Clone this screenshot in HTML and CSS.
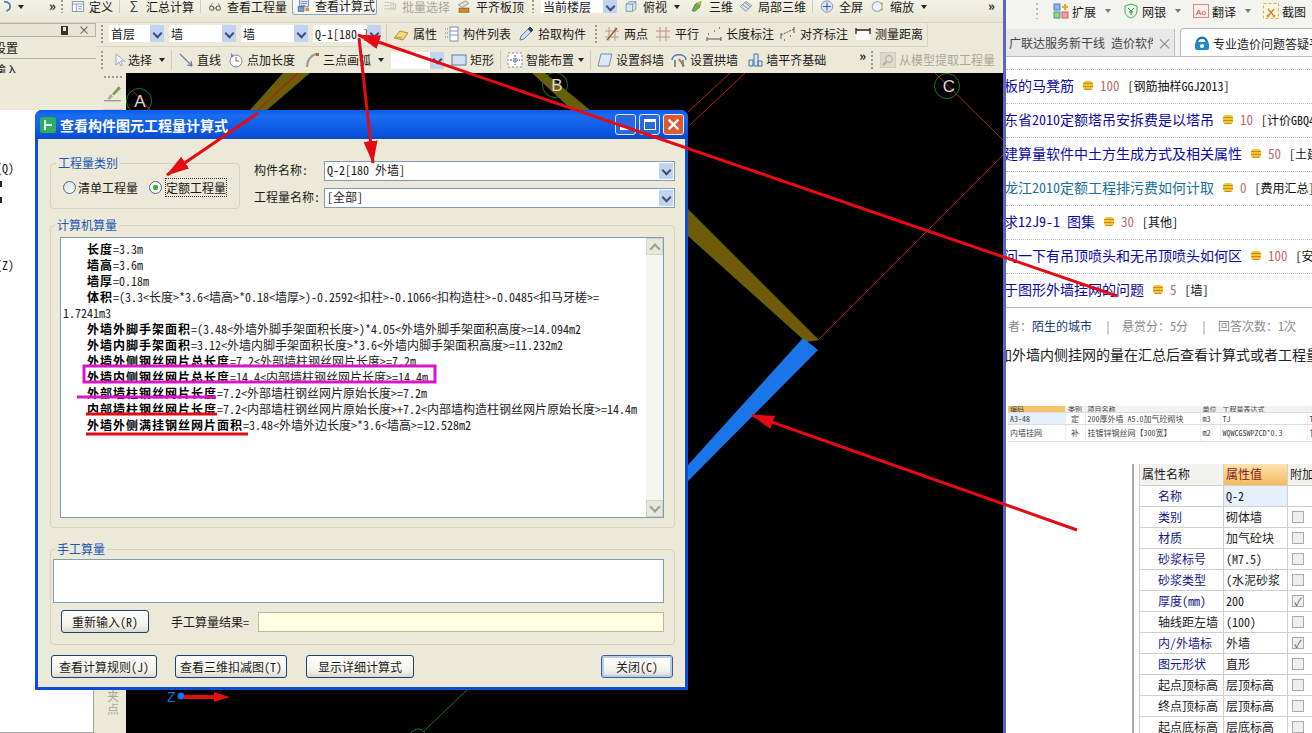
FILE: index.html
```html
<!DOCTYPE html>
<html lang="zh-CN">
<head>
    <meta charset="UTF-8">
    <title>查看构件图元工程量计算式</title>
    <link rel="stylesheet" href="styles.css">
</head>
<body>

<div class="desktop">

    <!-- CAD application -->
    <div class="app">
        <div class="bar bar-top">
            <svg class="ico ico-clip" viewBox="0 0 16 16"><path d="M3 2c6 0 9 3 7 9l-4 3" fill="none" stroke="#4a79b8" stroke-width="2"/></svg>
            <span class="caret caret-a"></span>
            <span class="more more-a">»</span>
            <span class="grip"></span>
            <span class="tool gap-0 t-first"><svg class="ico" viewBox="0 0 16 16"><rect x="1" y="2" width="14" height="12" fill="#fff" stroke="#6b86a8"/><path d="M1 5h14M6 5v9M8 8h5M8 11h5" stroke="#6b86a8" fill="none"/></svg>定义</span>
            <span class="sep"></span>
            <span class="tool gap-0"><span class="sigma">Σ</span>汇总计算</span>
            <span class="sep"></span>
            <span class="tool gap-5"><svg class="ico" viewBox="0 0 16 16"><circle cx="4" cy="10" r="2.6" fill="none" stroke="#666" stroke-width="1.3"/><circle cx="12" cy="10" r="2.6" fill="none" stroke="#666" stroke-width="1.3"/><path d="M6.5 10h3M2 8l3-4M14 8l-2-4" stroke="#666" fill="none"/></svg>查看工程量</span>
            <span class="tool tool-on"><svg class="ico ico-big" viewBox="0 0 20 20"><rect x="3" y="1" width="14" height="11" fill="#dfe8f5" stroke="#3e6aa8"/><path d="M5 4h10M5 7h10M5 10h7" stroke="#3e6aa8"/><rect x="1" y="12" width="9" height="7" fill="#7f9cc8" stroke="#34568c"/><circle cx="15" cy="16" r="3" fill="#d88b2a"/></svg>查看计算式</span>
            <span class="tool tool-off gap-6"><svg class="ico" viewBox="0 0 16 16"><path d="M1 3h9M1 7h6M1 11h9M12 2v11" stroke="#bbb" fill="none"/><rect x="9" y="5" width="6" height="6" fill="none" stroke="#bbb"/></svg>批量选择</span>
            <span class="tool gap-5"><svg class="ico" viewBox="0 0 16 16"><path d="M1 6l9-5 4 3-8 5z" fill="#e0e0d8" stroke="#888"/><rect x="2" y="10" width="12" height="5" fill="#c9922e" stroke="#8a5d18"/></svg>平齐板顶</span>
            <span class="grip"></span>
            <span class="combo combo-floor"><span class="combo-text">当前楼层</span><span class="combo-btn"></span></span>
            <span class="tool t-top"><svg class="ico" viewBox="0 0 16 16"><path d="M2 5l4-3h8v9l-4 3H2zM2 5h8v9M10 5l4-3" fill="#dbe7f2" stroke="#6d8aa5"/></svg>俯视</span>
            <span class="caret"></span>
            <span class="tool gap-5"><svg class="ico" viewBox="0 0 16 16"><path d="M2 13l4-8 7-3-2 7-6 5z" fill="#6fae4c" stroke="#3d7a2c"/><circle cx="11" cy="4" r="2" fill="#d8b13a"/></svg>三维</span>
            <span class="tool gap-0"><svg class="ico" viewBox="0 0 16 16"><path d="M1 8l7-6 7 5-7 7z" fill="#dfe6f0" stroke="#6d82a0"/><path d="M4 6l7 5M7 3.500l6 5" stroke="#6d82a0"/></svg>局部三维</span>
            <span class="sep"></span>
            <span class="tool gap-7"><svg class="ico" viewBox="0 0 16 16"><circle cx="8" cy="8" r="7" fill="#dfe7f3" stroke="#6d86aa"/><path d="M8 3v10M3 8h10" stroke="#3e62a0" stroke-width="1.400"/></svg>全屏</span>
            <span class="tool"><svg class="ico" viewBox="0 0 16 16"><circle cx="7" cy="8" r="6" fill="#eef3fa" stroke="#9db1cc" stroke-width="1.500"/><path d="M13 3v3M13 10v3" stroke="#d8a92e" stroke-width="2"/></svg>缩放</span>
            <span class="caret"></span>
            <span class="more more-b">»</span>
        </div>

        <div class="bar-row">
            <div class="side-top">
                <div class="pane-head"><span class="pin"></span><span class="pane-x">×</span></div>
                <div class="pane-row"><span class="pane-text">设置</span></div>
                <div class="pane-row"><span class="pane-text">输入</span></div>
            </div>

            <div class="toolbars">
                <div class="bar bar-mid">
                    <span class="grip grip-tight"></span>
                    <span class="combo combo-a"><span class="combo-text">首层</span><span class="combo-btn"></span></span>
                    <span class="combo combo-b"><span class="combo-text">墙</span><span class="combo-btn"></span></span>
                    <span class="combo combo-b"><span class="combo-text">墙</span><span class="combo-btn"></span></span>
                    <span class="combo combo-c"><span class="combo-text">Q-1[180 ]</span><span class="combo-btn"></span></span>
                    <span class="sep sep-tight"></span>
                    <span class="tool gap-6"><svg class="ico" viewBox="0 0 16 16"><path d="M1 12l6-7 8 2-5 7z" fill="#f1d98b" stroke="#b8912e"/><path d="M3 11l6 1" stroke="#b8912e"/></svg>属性</span>
                    <span class="tool"><svg class="ico" viewBox="0 0 16 16"><path d="M2 3h3M2 7h3M2 11h3" stroke="#777" stroke-dasharray="1 1"/><rect x="7" y="1" width="8" height="14" fill="#fff" stroke="#7a93b4"/><path d="M7 5h8M7 9h8" stroke="#7a93b4"/></svg>构件列表</span>
                    <span class="tool gap-6"><svg class="ico" viewBox="0 0 16 16"><path d="M2 14l1-4 7-7 3 3-7 7z" fill="#cfe0f2" stroke="#5c7fa8"/><path d="M10 3l2-2 3 3-2 2" fill="#345" stroke="#345"/></svg>拾取构件</span>
                    <span class="grip"></span>
                    <span class="tool"><svg class="ico" viewBox="0 0 16 16"><path d="M1 5h14M1 11h14M5 1v14M11 1v14" stroke="#b89a88" fill="none"/><path d="M3 14L13 2" stroke="#a0522d" stroke-width="1.300"/></svg>两点</span>
                    <span class="tool"><svg class="ico" viewBox="0 0 16 16"><path d="M1 5h14M1 11h14M5 1v14M11 1v14" stroke="#c58a8a" fill="none"/></svg>平行</span>
                    <span class="tool gap-6"><svg class="ico" viewBox="0 0 16 16"><path d="M1 11v4M15 11v4M1 13h14" stroke="#555" fill="none"/><path d="M2 8h1M13 2h1M8 5h1" stroke="#6a9a5b" stroke-width="2"/></svg>长度标注</span>
                    <span class="tool"><svg class="ico" viewBox="0 0 16 16"><path d="M1 9l13-6" stroke="#555" stroke-dasharray="2 1"/><path d="M1 7v6M14 1v6" stroke="#555"/><path d="M4 14h1M10 10h1" stroke="#6a9a5b" stroke-width="2"/></svg>对齐标注</span>
                    <span class="tool"><svg class="ico" viewBox="0 0 16 16"><rect x="1" y="4" width="14" height="10" fill="#fff"/><path d="M1 2v6M15 2v6M1 4h14" stroke="#222" fill="none" stroke-width="1.300"/></svg>测量距离</span>
                </div>

                <div class="bar bar-low">
                    <span class="grip grip-low"></span>
                    <span class="tool t-select"><svg class="ico" viewBox="0 0 16 16"><path d="M5 2v11l3-3 2 4 1.500-1-2-4h4z" fill="#fff" stroke="#9aa7b8"/></svg>选择</span>
                    <span class="caret caret-end"></span>
                    <span class="sep"></span>
                    <span class="tool gap-7"><svg class="ico" viewBox="0 0 16 16"><path d="M2 2l12 12M14 14l-5-1M14 14l-1-5" stroke="#5b7fa8" fill="none" stroke-width="1.200"/></svg>直线</span>
                    <span class="tool"><svg class="ico" viewBox="0 0 16 16"><circle cx="8" cy="9" r="6" fill="#fff" stroke="#6f8aa8"/><path d="M8 5v4h3" stroke="#8a5d3a" fill="none"/><path d="M3 1l3 3-3 2" fill="#6f8aa8"/></svg>点加长度</span>
                    <span class="tool"><svg class="ico" viewBox="0 0 16 16"><path d="M3 15C3 8 7 3 13 2" stroke="#999" fill="none" stroke-width="2"/><path d="M12 1h3v3h-3z" fill="#a06a3a"/></svg>三点画弧</span>
                    <span class="caret"></span>
                    <span class="combo combo-d"><span class="combo-text"></span><span class="combo-btn"></span></span>
                    <span class="tool gap-0"><svg class="ico" viewBox="0 0 16 16"><rect x="1" y="3" width="14" height="10" fill="#cfe0f5" stroke="#5d7fb0"/></svg>矩形</span>
                    <span class="sep"></span>
                    <span class="tool gap-6"><svg class="ico" viewBox="0 0 16 16"><rect x="1" y="1" width="14" height="14" fill="#fff" stroke="#888" stroke-dasharray="2 2"/><path d="M8 3v10M3 8h10" stroke="#345" stroke-dasharray="2 1"/><rect x="6" y="6" width="4" height="4" fill="#8ab"/></svg>智能布置</span>
                    <span class="caret caret-end"></span>
                    <span class="sep"></span>
                    <span class="tool gap-7"><svg class="ico" viewBox="0 0 16 16"><path d="M4 2h11l-3 12H1z" fill="#dde9f6" stroke="#6d8fb8"/></svg>设置斜墙</span>
                    <span class="tool"><svg class="ico" viewBox="0 0 16 16"><path d="M1 8C1 1 15 1 15 8M4 8v7M12 8v7" fill="none" stroke="#4f7aa8" stroke-width="1.500"/><path d="M8 7l5 7" stroke="#a9773a" stroke-width="2"/></svg>设置拱墙</span>
                    <span class="tool"><svg class="ico" viewBox="0 0 16 16"><path d="M2 8h4v6H2zM7 2h4v12H7zM11 9h4v5h-4z" fill="#dce7f5" stroke="#4a6fa5"/></svg>墙平齐基础</span>
                    <span class="more more-c">»</span>
                    <span class="grip"></span>
                    <span class="tool tool-off"><svg class="ico" viewBox="0 0 16 16"><rect x="0" y="0" width="16" height="16" fill="#dcd9c9" stroke="#c6c3b3"/><circle cx="9" cy="7" r="3.500" fill="none" stroke="#aaa"/><path d="M6 10l-3 3" stroke="#aaa" stroke-width="2"/></svg>从模型提取工程量</span>
                </div>
            </div>
        </div>

        <div class="work">
            <div class="side">
                <div class="side-list">
                    <span class="side-item side-q">(Q)</span>
                    <span class="side-item side-m1"></span>
                    <span class="side-item side-m2"></span>
                    <span class="side-item side-z">(Z)</span>
                </div>
            </div>

            <div class="vbar">
                <span class="vgrip"></span>
                <svg class="ico ico-brush" viewBox="0 0 16 16"><path d="M0 14h15" stroke="#888"/><path d="M3 12l3-4 2 2-3 3z" fill="#a9a9a9"/><path d="M7 8l6-7 2 2-6 6z" fill="#7c9a5b"/></svg>
                <span class="vsep"></span>
                <span class="vtext">夹点</span>
            </div>

            <div class="canvas">
                <svg class="cad" viewBox="126 73 877 660">
                    <!-- walls -->
                    <path d="M283 73L310 73L267 110L250 110Z" fill="#6b5e08"/>
                    <path d="M298 73L258 110" stroke="#a62a10" stroke-width="1.500"/>
                    <path d="M532 73L545 73L590 110L572 110Z" fill="#6b5e08"/>
                    <path d="M688 209L688 236L806 342L819 340Z" fill="#6b5e08"/>
                    <path d="M688 222L812 341" stroke="#8a4a10" stroke-width="1.500"/>
                    <!-- selected wall -->
                    <path d="M803 338L818 350L688 481L688 465Z" fill="#1a76e8"/>
                    <!-- axis lines -->
                    <g stroke="#b82020" fill="none">
                        <path d="M730 73L688 112"/>
                        <path d="M745 73L690 125"/>
                        <path d="M935 73L1003 140"/>
                        <path d="M1003 155L818 340"/>
                        <path d="M132 90L152 112"/>
                    </g>
                    <!-- axis bubbles -->
                    <g fill="none" stroke="#1f7a1f">
                        <circle cx="139" cy="101" r="12.500"/>
                        <circle cx="555" cy="85" r="12.500"/>
                        <circle cx="947" cy="86" r="12.500"/>
                        <circle cx="418" cy="737" r="8"/>
                        <path d="M424 731L467 690"/>
                    </g>
                    <g class="cad-label">
                        <text x="140" y="107">A</text>
                        <text x="557" y="91">B</text>
                        <text x="949" y="92">C</text>
                    </g>
                    <!-- ucs -->
                    <text class="cad-z" x="167" y="702">Z</text>
                    <circle cx="181" cy="696" r="3.500" fill="#1a6fe0"/>
                    <path d="M184 697H216" stroke="#e01010" stroke-width="4"/>
                    <path d="M214 692L230 697L214 702Z" fill="#e01010"/>
                </svg>
            </div>
        </div>
    </div>

    <!-- browser on the right -->
    <div class="browser">
        <div class="br-bar">
            <span class="br-grip"></span>
            <span class="br-tool"><svg class="ico" viewBox="0 0 16 16"><rect x="1" y="1" width="6" height="6" fill="#8fb7e8" stroke="#4a7fc0"/><rect x="1" y="9" width="6" height="6" fill="#8fd09a" stroke="#4aa060"/><rect x="9" y="9" width="6" height="6" fill="#f0a0a0" stroke="#d06060"/><path d="M12 1v6M9 4h6" stroke="#e8a820" stroke-width="2"/></svg>扩展</span>
            <span class="caret"></span>
            <span class="br-tool"><svg class="ico" viewBox="0 0 16 16"><path d="M8 1l6 2v5c0 4-3 6-6 7-3-1-6-3-6-7V3z" fill="#e6f5e6" stroke="#4aa860"/><path d="M5 5l3 3 3-3M8 8v4M6 9h4" stroke="#2e8a48" fill="none"/></svg>网银</span>
            <span class="caret"></span>
            <span class="br-tool"><svg class="ico" viewBox="0 0 16 16"><rect x="0.500" y="1.500" width="15" height="13" fill="#fdeeee" stroke="#d88"/><text class="ao" x="8" y="11.500">Ao</text></svg>翻译</span>
            <span class="caret"></span>
            <span class="br-tool"><svg class="ico" viewBox="0 0 16 16"><rect x="0.500" y="0.500" width="15" height="15" fill="#fff8e0" stroke="#d8b050" stroke-dasharray="3 2"/><path d="M5 13l6-7M11 13L5 6" stroke="#b8862a" stroke-width="1.300"/><circle cx="5" cy="13" r="1.500" fill="#d89a30"/><circle cx="11" cy="13" r="1.500" fill="#d89a30"/></svg>截图</span>
        </div>
        <div class="br-tabs">
            <span class="tab tab-off"><span class="tab-text">广联达服务新干线 造价软件</span><span class="tab-x">×</span></span>
            <span class="tab tab-on"><svg class="ico" viewBox="0 0 16 16"><path d="M3 8C3 1 13 1 13 8" fill="none" stroke="#1a78b8" stroke-width="2.500"/><rect x="1" y="7" width="14" height="8" rx="2" fill="#1f8ac8"/><circle cx="8" cy="11" r="2" fill="#fff"/></svg>专业造价问题答疑平台</span>
        </div>
        <div class="br-body">
            <ul class="q-list">
                <li class="q-row"><a class="q-link">板的马凳筋</a><span class="coin"></span><span class="q-score">100</span><span class="q-tag">[钢筋抽样GGJ2013]</span></li>
                <li class="q-row"><a class="q-link">东省2010定额塔吊安拆费是以塔吊</a><span class="coin"></span><span class="q-score">10</span><span class="q-tag">[计价GBQ4.0]</span></li>
                <li class="q-row"><a class="q-link">建算量软件中土方生成方式及相关属性</a><span class="coin"></span><span class="q-score">50</span><span class="q-tag">[土建]</span></li>
                <li class="q-row"><a class="q-link q-seen">龙江2010定额工程排污费如何计取</a><span class="coin"></span><span class="q-score">0</span><span class="q-tag">[费用汇总]</span></li>
                <li class="q-row"><a class="q-link">求12J9-1 图集</a><span class="coin"></span><span class="q-score">30</span><span class="q-tag">[其他]</span></li>
                <li class="q-row"><a class="q-link">问一下有吊顶喷头和无吊顶喷头如何区</a><span class="coin"></span><span class="q-score">100</span><span class="q-tag">[安装]</span></li>
                <li class="q-row"><a class="q-link">于图形外墙挂网的问题</a><span class="coin"></span><span class="q-score">5</span><span class="q-tag">[墙]</span></li>
            </ul>
            <div class="q-meta">
                <span class="meta-a">者：<b class="meta-name">陌生的城市</b></span><span class="meta-sep">|</span><span>悬赏分：5分</span><span class="meta-sep">|</span><span>回答次数：1次</span>
            </div>
            <p class="q-text">加外墙内侧挂网的量在汇总后查看计算式或者工程量</p>

            <table class="shot-table">
                <tr class="shot-head"><td>编码</td><td>类别</td><td>项目名称</td><td>单位</td><td>工程量表达式</td><td></td></tr>
                <tr><td class="shot-key">A3-48</td><td>定</td><td>200厚外墙 A5.0加气砼砌块</td><td>m3</td><td>TJ</td><td>T</td></tr>
                <tr class="shot-tall"><td>内墙挂网</td><td>补</td><td>挂镀锌钢丝网【300宽】</td><td>m2</td><td>WQWCGSWPZCD*0.3</td><td>甘</td></tr>
            </table>

            <div class="props">
                <table class="prop-table">
                    <tr><th>属性名称</th><th class="prop-hot">属性值</th><th>附加</th></tr>
                    <tr><td class="pn">名称</td><td class="pv pv-cur">Q-2</td><td></td></tr>
                    <tr><td class="pn">类别</td><td class="pv">砌体墙</td><td><span class="chk"></span></td></tr>
                    <tr><td class="pn">材质</td><td class="pv">加气砼块</td><td><span class="chk"></span></td></tr>
                    <tr><td class="pn">砂浆标号</td><td class="pv">(M7.5)</td><td><span class="chk"></span></td></tr>
                    <tr><td class="pn">砂浆类型</td><td class="pv">(水泥砂浆</td><td><span class="chk"></span></td></tr>
                    <tr><td class="pn">厚度(mm)</td><td class="pv">200</td><td><span class="chk chk-on">✓</span></td></tr>
                    <tr><td class="pn pn-k">轴线距左墙</td><td class="pv">(100)</td><td><span class="chk"></span></td></tr>
                    <tr><td class="pn">内/外墙标</td><td class="pv">外墙</td><td><span class="chk chk-on">✓</span></td></tr>
                    <tr><td class="pn">图元形状</td><td class="pv">直形</td><td><span class="chk"></span></td></tr>
                    <tr><td class="pn pn-k">起点顶标高</td><td class="pv">层顶标高</td><td><span class="chk"></span></td></tr>
                    <tr><td class="pn pn-k">终点顶标高</td><td class="pv">层顶标高</td><td><span class="chk"></span></td></tr>
                    <tr><td class="pn pn-k">起点底标高</td><td class="pv">层底标高</td><td><span class="chk"></span></td></tr>
                </table>
            </div>
        </div>
    </div>

    <!-- dialog window -->
    <div class="dialog">
        <div class="dlg-title">
            <svg class="dlg-icon" viewBox="0 0 16 16"><rect width="16" height="16" rx="2" fill="#2fae5f"/><path d="M5 3v10M5 8h7M9 5v0" stroke="#fff" stroke-width="1.800" fill="none"/></svg>
            <span class="dlg-name">查看构件图元工程量计算式</span>
            <span class="win-btn"><span class="win-min"></span></span>
            <span class="win-btn"><span class="win-max"></span></span>
            <span class="win-btn win-close">
                <svg viewBox="0 0 12 12"><path d="M1.500 1.500l9 9M10.500 1.500l-9 9" stroke="#fff" stroke-width="2.200"/></svg>
            </span>
        </div>
        <div class="dlg-body">
            <div class="dlg-head">
                <fieldset class="group group-kind">
                    <legend>工程量类别</legend>
                    <label class="radio"><span class="radio-dot"></span>清单工程量</label>
                    <label class="radio"><span class="radio-dot radio-on"></span><span class="focus">定额工程量</span></label>
                </fieldset>
                <div class="form-rows">
                    <div class="form-row">
                        <span class="form-label">构件名称:</span>
                        <span class="select"><span class="select-text">Q-2[180 外墙]</span><span class="select-btn"></span></span>
                    </div>
                    <div class="form-row">
                        <span class="form-label">工程量名称:</span>
                        <span class="select"><span class="select-text">[全部]</span><span class="select-btn"></span></span>
                    </div>
                </div>
            </div>

            <fieldset class="group group-calc">
                <legend>计算机算量</legend>
                <div class="calc-box">
                    <div class="calc-text">
                        <p class="calc-line"><b>长度</b>=3.3m</p>
                        <p class="calc-line"><b>墙高</b>=3.6m</p>
                        <p class="calc-line"><b>墙厚</b>=0.18m</p>
                        <p class="calc-line"><b>体积</b>=(3.3&lt;长度&gt;*3.6&lt;墙高&gt;*0.18&lt;墙厚&gt;)-0.2592&lt;扣柱&gt;-0.1066&lt;扣构造柱&gt;-0.0485&lt;扣马牙槎&gt;=</p>
                        <p class="calc-line calc-wrap">1.7241m3</p>
                        <p class="calc-line"><b>外墙外脚手架面积</b>=(3.48&lt;外墙外脚手架面积长度&gt;)*4.05&lt;外墙外脚手架面积高度&gt;=14.094m2</p>
                        <p class="calc-line"><b>外墙内脚手架面积</b>=3.12&lt;外墙内脚手架面积长度&gt;*3.6&lt;外墙内脚手架面积高度&gt;=11.232m2</p>
                        <p class="calc-line"><b>外墙外侧钢丝网片总长度</b>=7.2&lt;外部墙柱钢丝网片长度&gt;=7.2m</p>
                        <p class="calc-line"><b>外墙内侧钢丝网片总长度</b>=14.4&lt;内部墙柱钢丝网片长度&gt;=14.4m</p>
                        <p class="calc-line"><b>外部墙柱钢丝网片长度</b>=7.2&lt;外部墙柱钢丝网片原始长度&gt;=7.2m</p>
                        <p class="calc-line"><b>内部墙柱钢丝网片长度</b>=7.2&lt;内部墙柱钢丝网片原始长度&gt;+7.2&lt;内部墙构造柱钢丝网片原始长度&gt;=14.4m</p>
                        <p class="calc-line"><b>外墙外侧满挂钢丝网片面积</b>=3.48&lt;外墙外边长度&gt;*3.6&lt;墙高&gt;=12.528m2</p>
                    </div>
                    <div class="scroll">
                        <span class="scroll-btn scroll-up"></span>
                        <span class="scroll-btn scroll-down"></span>
                    </div>
                </div>
            </fieldset>

            <fieldset class="group group-hand">
                <legend>手工算量</legend>
                <div class="hand-box"></div>
                <div class="hand-row">
                    <button class="btn btn-reset">重新输入(R)</button>
                    <span class="hand-label">手工算量结果=</span>
                    <span class="hand-result"></span>
                </div>
            </fieldset>

            <div class="dlg-foot">
                <button class="btn btn-rule">查看计算规则(J)</button>
                <button class="btn btn-3d">查看三维扣减图(T)</button>
                <button class="btn btn-detail">显示详细计算式</button>
                <button class="btn btn-close">关闭(C)</button>
            </div>
        </div>
    </div>

    <!-- markup drawn over the screenshot -->
    <svg class="notes" viewBox="0 0 1312 733">
        <defs>
            <marker id="head" markerUnits="userSpaceOnUse" markerWidth="24" markerHeight="16" refX="22" refY="8" orient="auto">
                <path d="M0 1L23 8L0 15Z" fill="#e60a14"/>
            </marker>
        </defs>
        <g class="arrow">
            <path d="M258 113L167 175" marker-end="url(#head)"/>
            <path d="M359 38L373 163" marker-end="url(#head)"/>
            <path d="M1117 296L358 35" marker-end="url(#head)"/>
            <path d="M1077 530L752 415" marker-end="url(#head)"/>
        </g>
        <rect class="mark-box" x="84" y="366" width="351" height="16"/>
        <path class="mark-pink" d="M77 397H216"/>
        <path class="mark-red" d="M86 414H217"/>
        <path class="mark-red" d="M86 434H248"/>
    </svg>
</div>

</body>
</html>
```

FILE: styles.css
```css
* {
    box-sizing: border-box;
}

html, body {
    margin: 0;
    padding: 0;
}

body {
    width: 1312px;
    height: 733px;
    overflow: hidden;
    font-family: "Noto Sans Mono CJK SC", "Noto Sans CJK SC", "Liberation Sans", sans-serif;
    font-size: 12px;
    color: #1a1a1a;
}

.desktop {
    position: relative;
    display: flex;
    width: 1312px;
    height: 733px;
    overflow: hidden;
    background: #ece9d8;
}

/* ---------- application ---------- */
.app {
    display: flex;
    flex-direction: column;
    width: 1003px;
    flex: none;
}

.bar {
    display: flex;
    align-items: center;
    background: #ece9d8;
    white-space: nowrap;
    line-height: 16px;
}

/* the top bar is scrolled a little out of the picture */
.bar-top {
    height: 23px;
    padding-bottom: 9px;
    line-height: 13px;
    border-bottom: 1px solid #d8d5c5;
    background: linear-gradient(#f4f2e6, #e9e6d5);
}

.bar-top .tool {
    height: 13px;
}

.bar-top .tool-on {
    height: 18px;
    margin-top: -2px;
    border-top: 0;
    border-radius: 0 0 3px 3px;
}

.bar-top .ico {
    height: 13px;
}

.bar-row {
    display: flex;
    height: 50px;
    flex: none;
}

.side-top {
    width: 96px;
    flex: none;
    background: #e8e5d4;
}

.pane-head {
    display: flex;
    align-items: center;
    justify-content: flex-end;
    gap: 10px;
    height: 14px;
    padding-right: 5px;
    border: 1px solid #b5b29f;
    border-left: 0;
}

.pin {
    width: 7px;
    height: 9px;
    border: 2px solid #333;
    border-bottom-width: 4px;
    border-top-width: 1px;
}

.pane-x {
    color: #555;
    font-size: 12px;
    line-height: 12px;
}

.pane-row {
    height: 22px;
    line-height: 22px;
    border-bottom: 1px solid #b5b29f;
    overflow: hidden;
    background: #ece9d8;
}

.pane-text {
    display: block;
    margin-left: -6px;
}

.toolbars {
    display: flex;
    flex-direction: column;
    flex: 1;
    min-width: 0;
}

.bar-mid {
    height: 24px;
    width: 832px;
    padding: 0 0 2px 2px;
    border-bottom: 1px solid #d8d5c5;
    border-right: 1px solid #d8d5c5;
}

.bar-mid .tool {
    margin-right: 7px;
}

.bar-mid .tool.gap-6 {
    margin-right: 6px;
}

.bar-low {
    height: 26px;
    padding-left: 2px;
}

.bar-low .tool {
    gap: 3px;
}

.grip {
    flex: none;
    width: 2px;
    height: 18px;
    margin: 0 7px 0 3px;
    background: repeating-linear-gradient(#9d9a88 0 2px, transparent 2px 4px);
}

.bar-top .grip {
    height: 13px;
}

.grip-tight {
    margin-right: 6px;
}

.grip-low {
    margin-right: 8px;
}

.sep {
    flex: none;
    width: 1px;
    height: 20px;
    margin: 0 6px;
    background: #cfccba;
}

.bar-top .sep {
    height: 13px;
}

.sep-tight {
    margin: 0 6px 0 0;
}

.caret {
    flex: none;
    width: 0;
    height: 0;
    margin: 0 9px 0 -2px;
    border: 3px solid transparent;
    border-top: 4px solid #222;
    border-bottom: 0;
}

.caret-a {
    margin: 0 0 0 2px;
}

.caret-end {
    margin-right: 0;
}

.more {
    flex: none;
    font-size: 13px;
    font-weight: bold;
    line-height: 12px;
    align-self: flex-start;
}

.more-a {
    margin: 0 2px 0 25px;
}

.more-b {
    margin-left: 52px;
}

.more-c {
    margin: 3px 2px 0 24px;
}

.tool {
    display: inline-flex;
    align-items: center;
    flex: none;
    gap: 4px;
    margin-right: 9px;
}

.gap-0 {
    margin-right: 0;
}

.gap-5 {
    margin-right: 5px;
}

.gap-6 {
    margin-right: 6px;
}

.gap-7 {
    margin-right: 7px;
}

.ico {
    flex: none;
    width: 16px;
    height: 16px;
}

.ico-big {
    width: 20px;
    height: 20px;
}

.t-first {
    gap: 3px;
}

.sigma {
    width: 16px;
    text-align: center;
    font-size: 14px;
    line-height: 13px;
    color: #444;
}

.tool-on {
    height: 22px;
    gap: 1px;
    padding: 0 1px;
    margin: 0 5px 0 0;
    background: #f8f7f1;
    border: 1px solid #8fa2bd;
    border-radius: 3px;
}

.tool-off {
    color: #a9a79a;
}

.t-top {
    margin-left: 1px;
}

.t-select {
    margin-right: 9px;
}

.bar-low .t-select {
    gap: 1px;
}

.combo {
    display: inline-flex;
    align-items: center;
    justify-content: space-between;
    flex: none;
    height: 17px;
    margin-right: 5px;
    background: #fff;
}

.bar-top .combo {
    height: 13px;
}

.combo-a {
    width: 55px;
}

.combo-b {
    width: 67px;
}

.combo-c {
    width: 68px;
}

.combo-d {
    width: 53px;
    margin: 0 7px 0 -2px;
}

.combo-floor {
    width: 76px;
}

.combo-text {
    padding-left: 2px;
    overflow: hidden;
}

.combo-btn, .select-btn {
    position: relative;
    flex: none;
    width: 14px;
    height: 100%;
    background: #c1d3f0;
}

.combo-btn::after, .select-btn::after {
    content: "";
    position: absolute;
    left: 4px;
    top: 50%;
    width: 5px;
    height: 5px;
    margin-top: -4px;
    border-right: 2px solid #3d4f73;
    border-bottom: 2px solid #3d4f73;
    transform: rotate(45deg);
}

/* ---------- work area ---------- */
.work {
    display: flex;
    flex: 1;
    min-height: 0;
}

.side {
    width: 100px;
    flex: none;
    display: flex;
    flex-direction: column;
    background: #ece9d8;
}

.side-list {
    position: relative;
    width: 94px;
    height: 658px;
    margin-top: 37px;
    background: #fff;
    border-right: 1px solid #a8a8a0;
    border-bottom: 1px solid #a8a8a0;
    overflow: hidden;
}

.side-item {
    position: absolute;
    left: -4px;
}

.side-q {
    top: 49px;
}

.side-z {
    top: 146px;
}

.side-m1, .side-m2 {
    left: 0;
    width: 2px;
    height: 6px;
    background: #222;
}

.side-m1 {
    top: 71px;
}

.side-m2 {
    top: 87px;
}

.vbar {
    display: flex;
    flex-direction: column;
    align-items: center;
    width: 26px;
    flex: none;
    background: #ece9d8;
}

.vgrip {
    width: 18px;
    height: 2px;
    margin-top: 3px;
    background: repeating-linear-gradient(90deg, #9d9a88 0 2px, transparent 2px 4px);
}

.ico-brush {
    width: 18px;
    height: 18px;
    margin-top: 7px;
}

.vsep {
    width: 20px;
    height: 1px;
    margin-top: 6px;
    background: #cfccba;
}

.vtext {
    width: 12px;
    margin-top: auto;
    margin-bottom: 18px;
    color: #a9a79a;
    line-height: 13px;
}

.canvas {
    flex: 1;
    background: #000;
    min-width: 0;
}

.cad {
    display: block;
    width: 877px;
    height: 660px;
}

.cad-label text {
    fill: #d8d8d8;
    font-family: "Liberation Sans", sans-serif;
    font-size: 17px;
    text-anchor: middle;
}

.cad-z {
    fill: #1a6fe0;
    font-family: "Liberation Sans", sans-serif;
    font-size: 14px;
}

/* ---------- browser ---------- */
.browser {
    display: flex;
    flex-direction: column;
    width: 309px;
    flex: none;
    background: #fff;
    border-left: 3px solid #5a66c0;
}

.br-bar {
    display: flex;
    align-items: center;
    height: 28px;
    flex: none;
    padding-bottom: 6px;
    background: #f3f3ef;
    white-space: nowrap;
}

.br-grip {
    flex: none;
    width: 2px;
    height: 16px;
    margin: 0 15px 0 30px;
    background: repeating-linear-gradient(#bbb 0 2px, transparent 2px 5px);
}

.br-tool {
    display: inline-flex;
    align-items: center;
    gap: 3px;
    flex: none;
    font-size: 12px;
    margin-right: 9px;
}

.br-bar .caret {
    margin: 0 12px 0 0;
    border-top-color: #777;
}

.ao {
    font-family: "Liberation Sans", sans-serif;
    font-size: 8px;
    fill: #c44;
    text-anchor: middle;
}

.br-tabs {
    display: flex;
    align-items: flex-end;
    gap: 5px;
    height: 29px;
    flex: none;
    background: #f3f3ef;
    border-bottom: 1px solid #bbb;
    white-space: nowrap;
    overflow: hidden;
}

.tab {
    display: inline-flex;
    align-items: center;
    flex: none;
    height: 27px;
}

.tab-off {
    width: 169px;
    padding-left: 3px;
    background: #e8e8e8;
    color: #444;
    border-right: 1px solid #bbb;
}

.tab-text {
    width: 144px;
    overflow: hidden;
}

.tab-x {
    margin-left: 4px;
    font-size: 15px;
    color: #888;
}

.tab-on {
    gap: 3px;
    padding-left: 13px;
    height: 29px;
    margin-bottom: -1px;
    background: #fff;
    border: 1px solid #bbb;
    border-bottom: 0;
    border-radius: 4px 0 0 0;
}

.br-body {
    flex: 1;
    min-height: 0;
    overflow: hidden;
}

.q-list {
    margin: 12px 0 0;
    padding: 0;
    list-style: none;
    border-top: 1px dotted #b5b5b5;
}

.q-row {
    display: flex;
    align-items: center;
    height: 34px;
    padding-bottom: 3px;
    border-bottom: 1px dotted #b5b5b5;
    white-space: nowrap;
    overflow: hidden;
}

.q-row:last-child {
    border-bottom: 1px solid #bbb;
}

.q-link {
    margin-left: -2px;
    font-size: 14px;
    color: #0a0aa8;
}

.q-seen {
    color: #17709a;
}

.coin {
    flex: none;
    width: 10px;
    height: 9px;
    margin: 0 7px 0 9px;
    border-radius: 3px;
    background: repeating-linear-gradient(#f3c63a 0 2px, #c98a14 2px 3px);
}

.q-score {
    margin-right: 8px;
    font-size: 13px;
    color: #bb6a6a;
}

.q-tag {
    font-size: 12px;
    color: #111;
}

.q-meta {
    display: flex;
    height: 34px;
    align-items: center;
    padding-left: 2px;
    color: #8a8a8a;
    white-space: nowrap;
}

.meta-name {
    font-weight: normal;
    color: #143c78;
}

.meta-sep {
    margin: 0 11px 0 13px;
}

.q-text {
    margin: 2px 0 0 -8px;
    font-size: 14px;
    line-height: 20px;
    white-space: nowrap;
    color: #222;
}

.shot-table {
    width: 320px;
    margin: 42px 0 0 2px;
    border-collapse: collapse;
    table-layout: fixed;
    font-size: 8px;
    line-height: 10px;
    color: #444;
    white-space: nowrap;
}

.shot-table td {
    height: 12px;
    padding: 0 2px;
    border-bottom: 1px solid #ddd;
    border-right: 1px solid #eee;
    overflow: hidden;
}

.shot-table td:nth-child(1) {
    width: 57px;
}

.shot-table td:nth-child(2) {
    width: 20px;
    text-align: center;
}

.shot-table td:nth-child(3) {
    width: 115px;
}

.shot-table td:nth-child(4) {
    width: 20px;
}

.shot-table td:nth-child(5) {
    width: 87px;
}

.shot-table .shot-head td {
    height: 6px;
    line-height: 6px;
    font-size: 7px;
    background: #f1f1ee;
}

.shot-table .shot-head td:first-child {
    background: #f3c468;
}

.shot-key {
    background: #e5f0fa;
}

.shot-table .shot-tall td {
    height: 17px;
}

.props {
    width: 180px;
    height: 273px;
    margin: 22px 0 0 126px;
    padding-left: 5px;
    border-left: 2px solid #aaa;
    border-bottom: 4px solid #e4e4dc;
    overflow: hidden;
}

.prop-table {
    width: 175px;
    border-collapse: collapse;
    table-layout: fixed;
    white-space: nowrap;
    line-height: 14px;
}

.prop-table th, .prop-table td {
    height: 21px;
    padding: 0 2px;
    border: 1px solid #cfcfcf;
    font-weight: normal;
    overflow: hidden;
    text-align: left;
}

.prop-table th:nth-child(1) {
    width: 84px;
}

.prop-table th:nth-child(2) {
    width: 64px;
}

.prop-table th {
    border-top: 0;
    background: #f2f2ee;
}

.prop-table .prop-hot {
    color: #8a1a1a;
    background: linear-gradient(#fde3b0, #f3b95c);
}

.prop-table .pn {
    padding-left: 18px;
    color: #14148c;
}

.prop-table .pn-k {
    color: #222;
}

.pv-cur {
    background: #e5f0fa;
}

.chk {
    display: block;
    width: 12px;
    height: 12px;
    margin-left: 2px;
    border: 1px solid #aaa;
    background: #eee;
    color: #557;
    font-size: 11px;
    line-height: 11px;
    text-align: center;
}

/* ---------- dialog ---------- */
.dialog {
    position: absolute;
    left: 35px;
    top: 110px;
    width: 653px;
    height: 580px;
    display: flex;
    flex-direction: column;
    background: #0a4fd8;
    border: 3px solid #0a4fd8;
    border-top: 0;
    border-radius: 7px 7px 0 0;
}

.dlg-title {
    display: flex;
    align-items: center;
    height: 29px;
    flex: none;
    gap: 3px;
    color: #fff;
    background: linear-gradient(#0a5ce8, #1a6cf0 20%, #0a55e0 80%, #0a48c8);
    margin: 0 -3px;
    padding: 0 4px 0 5px;
    border-radius: 7px 7px 0 0;
}

.dlg-icon {
    width: 16px;
    height: 16px;
    flex: none;
}

.dlg-name {
    flex: 1;
    margin-left: 1px;
    font-size: 14px;
    font-weight: bold;
}

.win-btn {
    display: flex;
    align-items: center;
    justify-content: center;
    width: 21px;
    height: 21px;
    flex: none;
    background: #2a68e0;
    border: 1px solid #dfe8fa;
    border-radius: 3px;
}

.win-min {
    width: 9px;
    height: 3px;
    margin-top: 8px;
    margin-right: 3px;
    background: #fff;
}

.win-max {
    width: 12px;
    height: 11px;
    border: 1px solid #fff;
    border-top-width: 3px;
}

.win-close {
    background: #dc5a32;
}

.win-close svg {
    width: 13px;
    height: 13px;
}

.dlg-body {
    flex: 1;
    min-height: 0;
    padding: 0 10px 0 12px;
    background: #ece9d8;
}

.dlg-head {
    display: flex;
    height: 79px;
}

.group {
    margin: 0;
    padding: 0;
    border: 1px solid #d6d3c2;
    border-radius: 4px;
    min-width: 0;
}

.group legend {
    margin-left: 4px;
    padding: 0 2px;
    color: #1a55b8;
    line-height: 14px;
}

.group-kind {
    display: flex;
    align-items: center;
    gap: 11px;
    width: 190px;
    height: 53px;
    margin-top: 17px;
    padding: 0 0 3px 12px;
}

.group-kind legend {
    margin-left: -7px;
}

.radio {
    display: flex;
    align-items: center;
    gap: 2px;
    white-space: nowrap;
}

.radio-dot {
    flex: none;
    width: 13px;
    height: 13px;
    border: 1px solid #4a6a92;
    border-radius: 50%;
    background: linear-gradient(135deg, #dcdcd4, #fff);
}

.radio-on {
    margin-right: 2px;
    background: radial-gradient(#3cb43c 0 2.500px, #fff 3px);
}

.focus {
    outline: 1px dotted #333;
}

.form-rows {
    display: flex;
    flex-direction: column;
    gap: 7px;
    margin: 22px 0 0 14px;
}

.form-row {
    display: flex;
    align-items: center;
    height: 20px;
}

.form-label {
    width: 70px;
    flex: none;
    margin-bottom: 3px;
    white-space: nowrap;
}

.select {
    display: flex;
    align-items: center;
    justify-content: space-between;
    width: 351px;
    height: 20px;
    padding-right: 1px;
    background: #fff;
    border: 1px solid #7f9db9;
}

.select-text {
    margin-bottom: 3px;
    padding-left: 2px;
}

.select-btn {
    height: 16px;
}

.group-calc {
    height: 310px;
}

.calc-box {
    display: flex;
    width: 604px;
    height: 281px;
    margin: 5px 0 0 9px;
    background: #fff;
    border: 1px solid #7f9db9;
}

.calc-text {
    flex: 1;
    padding: 3px 0 0 2px;
    white-space: nowrap;
    overflow: hidden;
}

.calc-line {
    height: 16px;
    margin: 0;
    padding-left: 24px;
    line-height: 16px;
    color: #222;
}

.calc-line b {
    letter-spacing: 1px;
    color: #000;
}

.calc-wrap {
    padding-left: 0;
}

.scroll {
    display: flex;
    flex-direction: column;
    justify-content: space-between;
    width: 17px;
    flex: none;
    background: #f6f6f0;
}

.scroll-btn {
    position: relative;
    height: 17px;
    background: #e6e9dc;
    border: 1px solid #cfd3c6;
}

.scroll-btn::after {
    content: "";
    position: absolute;
    left: 4px;
    width: 6px;
    height: 6px;
    border-left: 2px solid #9aa08a;
    border-top: 2px solid #9aa08a;
}

.scroll-up::after {
    top: 6px;
    transform: rotate(45deg);
}

.scroll-down::after {
    top: 2px;
    transform: rotate(225deg);
}

.group-hand {
    height: 103px;
    margin-top: 14px;
}

.hand-box {
    width: 611px;
    height: 44px;
    margin: 3px 0 0 2px;
    background: #fff;
    border: 1px solid #7f9db9;
}

.hand-row {
    display: flex;
    align-items: center;
    margin: 7px 0 0 10px;
}

.btn {
    height: 23px;
    padding: 0;
    font-family: inherit;
    font-size: 12px;
    color: #1a1a1a;
    background: linear-gradient(#fff, #f3f2ea 70%, #dcd9c9);
    border: 1px solid #1f3f6e;
    border-radius: 3px;
}

.btn-reset {
    width: 88px;
}

.hand-label {
    margin-left: 22px;
    width: 87px;
    white-space: nowrap;
}

.hand-result {
    width: 406px;
    height: 20px;
    background: #ffffe1;
    border: 1px solid #b9b8a6;
}

.dlg-foot {
    display: flex;
    margin: 10px 2px 0 1px;
}

.btn-rule {
    width: 106px;
}

.btn-3d {
    width: 112px;
    margin-left: 18px;
}

.btn-detail {
    width: 108px;
    margin-left: 19px;
}

.btn-close {
    width: 72px;
    margin-left: auto;
    border-color: #3a5f96;
    box-shadow: inset 0 0 0 2px #b8cdee;
}

/* ---------- markup ---------- */
.notes {
    position: absolute;
    left: 0;
    top: 0;
    width: 1312px;
    height: 733px;
    pointer-events: none;
}

.arrow path {
    fill: none;
    stroke: #e60a14;
    stroke-width: 3;
}

.mark-box {
    fill: none;
    stroke: #d916c8;
    stroke-width: 3;
}

.mark-pink {
    stroke: #d916c8;
    stroke-width: 3;
}

.mark-red {
    stroke: #e00a10;
    stroke-width: 3;
}
```
